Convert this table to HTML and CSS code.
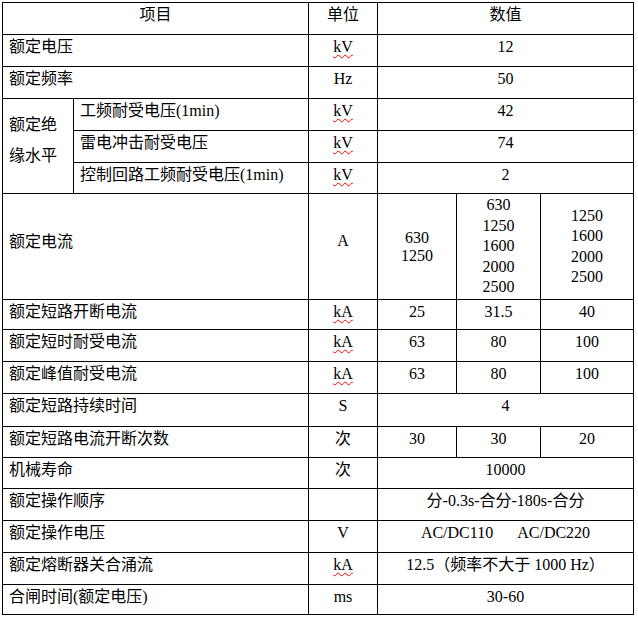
FILE: index.html
```html
<!DOCTYPE html>
<html lang="zh-CN">
<head>
<meta charset="utf-8">
<title>技术参数</title>
<link rel="stylesheet" href="styles.css">
</head>
<body>
<div class="spec">
  <div class="c m s2">项目</div>
  <div class="c m">单位</div>
  <div class="c m s3">数值</div>

  <div class="c l s2">额定电压</div>
  <div class="c m"><span class="sp">kV</span></div>
  <div class="c m s3">12</div>

  <div class="c l s2">额定频率</div>
  <div class="c m">Hz</div>
  <div class="c m s3">50</div>

  <div class="c l r3 ins">额定绝<br>缘水平</div>
  <div class="c l">工频耐受电压(1min)</div>
  <div class="c m"><span class="sp">kV</span></div>
  <div class="c m s3">42</div>

  <div class="c l">雷电冲击耐受电压</div>
  <div class="c m"><span class="sp">kV</span></div>
  <div class="c m s3">74</div>

  <div class="c l">控制回路工频耐受电压(1min)</div>
  <div class="c m"><span class="sp">kV</span></div>
  <div class="c m s3">2</div>

  <div class="c l s2 v lab">额定电流</div>
  <div class="c m v unit">A</div>
  <div class="c m v two"><div>630<br>1250</div></div>
  <div class="c m v five"><div>630<br>1250<br>1600<br>2000<br>2500</div></div>
  <div class="c m v five"><div>1250<br>1600<br>2000<br>2500</div></div>

  <div class="c l s2">额定短路开断电流</div>
  <div class="c m"><span class="sp">kA</span></div>
  <div class="c m">25</div>
  <div class="c m">31.5</div>
  <div class="c m">40</div>

  <div class="c l s2">额定短时耐受电流</div>
  <div class="c m"><span class="sp">kA</span></div>
  <div class="c m">63</div>
  <div class="c m">80</div>
  <div class="c m">100</div>

  <div class="c l s2">额定峰值耐受电流</div>
  <div class="c m"><span class="sp">kA</span></div>
  <div class="c m">63</div>
  <div class="c m">80</div>
  <div class="c m">100</div>

  <div class="c l s2">额定短路持续时间</div>
  <div class="c m">S</div>
  <div class="c m s3">4</div>

  <div class="c l s2">额定短路电流开断次数</div>
  <div class="c m">次</div>
  <div class="c m">30</div>
  <div class="c m">30</div>
  <div class="c m">20</div>

  <div class="c l s2">机械寿命</div>
  <div class="c m">次</div>
  <div class="c m s3">10000</div>

  <div class="c l s2">额定操作顺序</div>
  <div class="c m"></div>
  <div class="c m s3">分-0.3s-合分-180s-合分</div>

  <div class="c l s2">额定操作电压</div>
  <div class="c m">V</div>
  <div class="c m s3">AC/DC110<span class="gap">AC/DC220</span></div>

  <div class="c l s2">额定熔断器关合涌流</div>
  <div class="c m"><span class="sp">kA</span></div>
  <div class="c m s3">12.5（频率不大于 1000 Hz）</div>

  <div class="c l s2">合闸时间(额定电压)</div>
  <div class="c m">ms</div>
  <div class="c m s3">30-60</div>
</div>
</body>
</html>
```
FILE: styles.css
```css
html, body {
  background: #fff;
}

body {
  margin: 0;
  padding: 2px;
  font-family: "Liberation Serif", "Noto Sans CJK SC", serif;
  font-size: 16px;
  line-height: 20px;
  color: #000;
}

.spec {
  display: grid;
  width: 632px;
  box-sizing: border-box;
  grid-template-columns: 70px 234px 68px 78px 83px 92px;
  grid-template-rows: 31px 31px 31px 31px 31px 30px 105px 29px 31px 31px 32px 30px 30px 31px 31px 31px 29px;
  gap: 1px;
  padding: 1px;
  background: #000;
}

.c {
  background: #fff;
  padding-top: 2px;
  white-space: nowrap;
  overflow: hidden;
}

.l {
  padding-left: 6px;
  text-align: left;
}

.m {
  text-align: center;
}

.s2 {
  grid-column: span 2;
}

.s3 {
  grid-column: span 3;
}

.r3 {
  grid-row: span 3;
}

.gap {
  margin-left: 24px;
}

.sp {
  text-decoration: underline wavy #ff0000;
  text-decoration-thickness: 1px;
  text-underline-offset: 2px;
  text-decoration-skip-ink: none;
}

.ins {
  padding-top: 10px;
  line-height: 31px;
}

.v {
  display: flex;
  align-items: center;
  justify-content: center;
  padding-top: 0;
}

.v.l {
  justify-content: flex-start;
}

.lab {
  padding-bottom: 10px;
}

.unit {
  padding-bottom: 12px;
}

.two {
  line-height: 18px;
}

.five {
  line-height: 20.5px;
}
```
